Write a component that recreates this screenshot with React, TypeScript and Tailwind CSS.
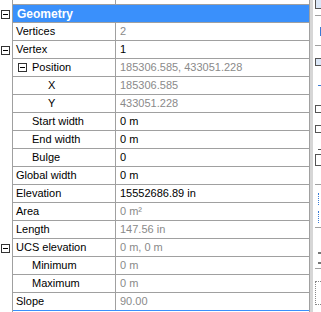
import React from 'react';

type Row = {
  label: string;
  value: string;
  indent: 0 | 1 | 2;
  gray?: boolean;
  gutterToggle?: boolean;
  inlineToggle?: boolean;
};

const rows: Row[] = [
  { label: 'Vertices', value: '2', indent: 0, gray: true },
  { label: 'Vertex', value: '1', indent: 0, gutterToggle: true },
  { label: 'Position', value: '185306.585, 433051.228', indent: 1, gray: true, inlineToggle: true },
  { label: 'X', value: '185306.585', indent: 2, gray: true },
  { label: 'Y', value: '433051.228', indent: 2, gray: true },
  { label: 'Start width', value: '0 m', indent: 1 },
  { label: 'End width', value: '0 m', indent: 1 },
  { label: 'Bulge', value: '0', indent: 1 },
  { label: 'Global width', value: '0 m', indent: 0 },
  { label: 'Elevation', value: '15552686.89 in', indent: 0 },
  { label: 'Area', value: '0 m²', indent: 0, gray: true },
  { label: 'Length', value: '147.56 in', indent: 0, gray: true },
  { label: 'UCS elevation', value: '0 m, 0 m', indent: 0, gray: true, gutterToggle: true },
  { label: 'Minimum', value: '0 m', indent: 1, gray: true },
  { label: 'Maximum', value: '0 m', indent: 1, gray: true },
  { label: 'Slope', value: '90.00', indent: 0, gray: true },
];

const Minus: React.FC<{ className?: string }> = ({ className = '' }) => (
  <div className={`w-[9px] h-[9px] border border-[#333] bg-white flex items-center justify-center ${className}`}>
    <div className="w-[5px] h-px bg-black" />
  </div>
);

const indentClass = ['pl-[3px]', 'pl-[19px]', 'pl-[35px]'];

export default function App() {
  return (
    <div
      className="w-[321px] h-[312px] bg-white overflow-hidden flex text-[11px] text-black"
      style={{ fontFamily: '"Liberation Sans", Arial, sans-serif' }}
    >
      {/* gutter */}
      <div className="w-[12px] shrink-0 flex flex-col">
        <div className="h-[5px]" />
        <div className="h-[18px] flex items-center pl-px">
          <Minus />
        </div>
        {rows.map((r, i) => (
          <div key={i} className="h-[18px] flex items-center pl-px">
            {r.gutterToggle && <Minus />}
          </div>
        ))}
      </div>

      {/* grid */}
      <div className="w-[298px] shrink-0 flex flex-col border-l border-r border-[#a0a0a0]">
        <div className="h-[5px] flex border-b border-[#a0a0a0]">
          <div className="w-[103px] border-r border-[#a0a0a0]" />
          <div className="flex-1" />
        </div>
        <div className="h-[18px] bg-[#3a90fb] border-b border-[#a0a0a0] flex items-center pl-[4px] text-white font-bold text-[12px]">
          Geometry
        </div>
        {rows.map((r, i) => (
          <div
            key={i}
            className={`h-[18px] flex border-b ${i === rows.length - 1 ? 'border-[#3a90fb]' : 'border-[#a0a0a0]'}`}
          >
            <div className={`w-[103px] shrink-0 border-r border-[#a0a0a0] flex items-center ${indentClass[r.indent]}`}>
              {r.inlineToggle && <Minus className="-ml-[14px] mr-[5px]" />}
              <span className="whitespace-nowrap">{r.label}</span>
            </div>
            <div className={`flex-1 flex items-center pl-[4px] whitespace-nowrap ${r.gray ? 'text-[#8a8a8a]' : ''}`}>
              {r.value}
            </div>
          </div>
        ))}
      </div>

      {/* splitter */}
      <div className="w-[3px] shrink-0 bg-[#d6d6d6]" />

      {/* clipped neighbour panel */}
      <div className="flex-1 flex flex-col pl-[2px]">
        <div className="h-[9px] w-[8px] border border-[#555] border-t-0 bg-[#dbe7f7]" />
        <div className="mt-[6px] h-px w-full bg-[#a0a0a0]" />
        <div className="mt-[11px] ml-[5px] h-[9px] w-[2px] bg-[#3a7bd5]" />
        <div className="mt-[9px] h-px w-full bg-[#a0a0a0]" />
        <div className="mt-[12px] h-[8px] w-[8px] border border-[#555] bg-[#dbe7f7]" />
        <div className="mt-[19px] ml-[3px] h-px w-[5px] bg-[#3a7bd5]" />
        <div className="mt-[19px] h-[8px] w-[8px] border border-[#555]" />
        <div className="mt-[12px] h-[8px] w-[8px] border border-[#555]" />
        <div className="mt-[16px] ml-[3px] h-px w-[5px] bg-[#555]" />
        <div className="mt-[4px] h-[12px] w-[8px] border border-[#555]" />
        <div className="mt-[18px] h-px w-full bg-[#a0a0a0]" />
        <div className="mt-[8px] ml-[3px] h-[12px] w-[2px] border-l border-dotted border-[#3a7bd5]" />
        <div className="mt-[6px] ml-[3px] h-[12px] w-[2px] border-l border-dotted border-[#3a7bd5]" />
        <div className="mt-[4px] h-px w-full bg-[#a0a0a0]" />
        <div className="mt-[24px] ml-[3px] h-[2px] w-[4px] bg-[#777]" />
        <div className="mt-[8px] ml-[3px] h-[2px] w-[4px] bg-[#777]" />
        <div className="mt-[4px] h-px w-full bg-[#a0a0a0]" />
        <div className="mt-[12px] h-[24px] w-[8px] border border-dotted border-[#888]" />
      </div>
    </div>
  );
}
